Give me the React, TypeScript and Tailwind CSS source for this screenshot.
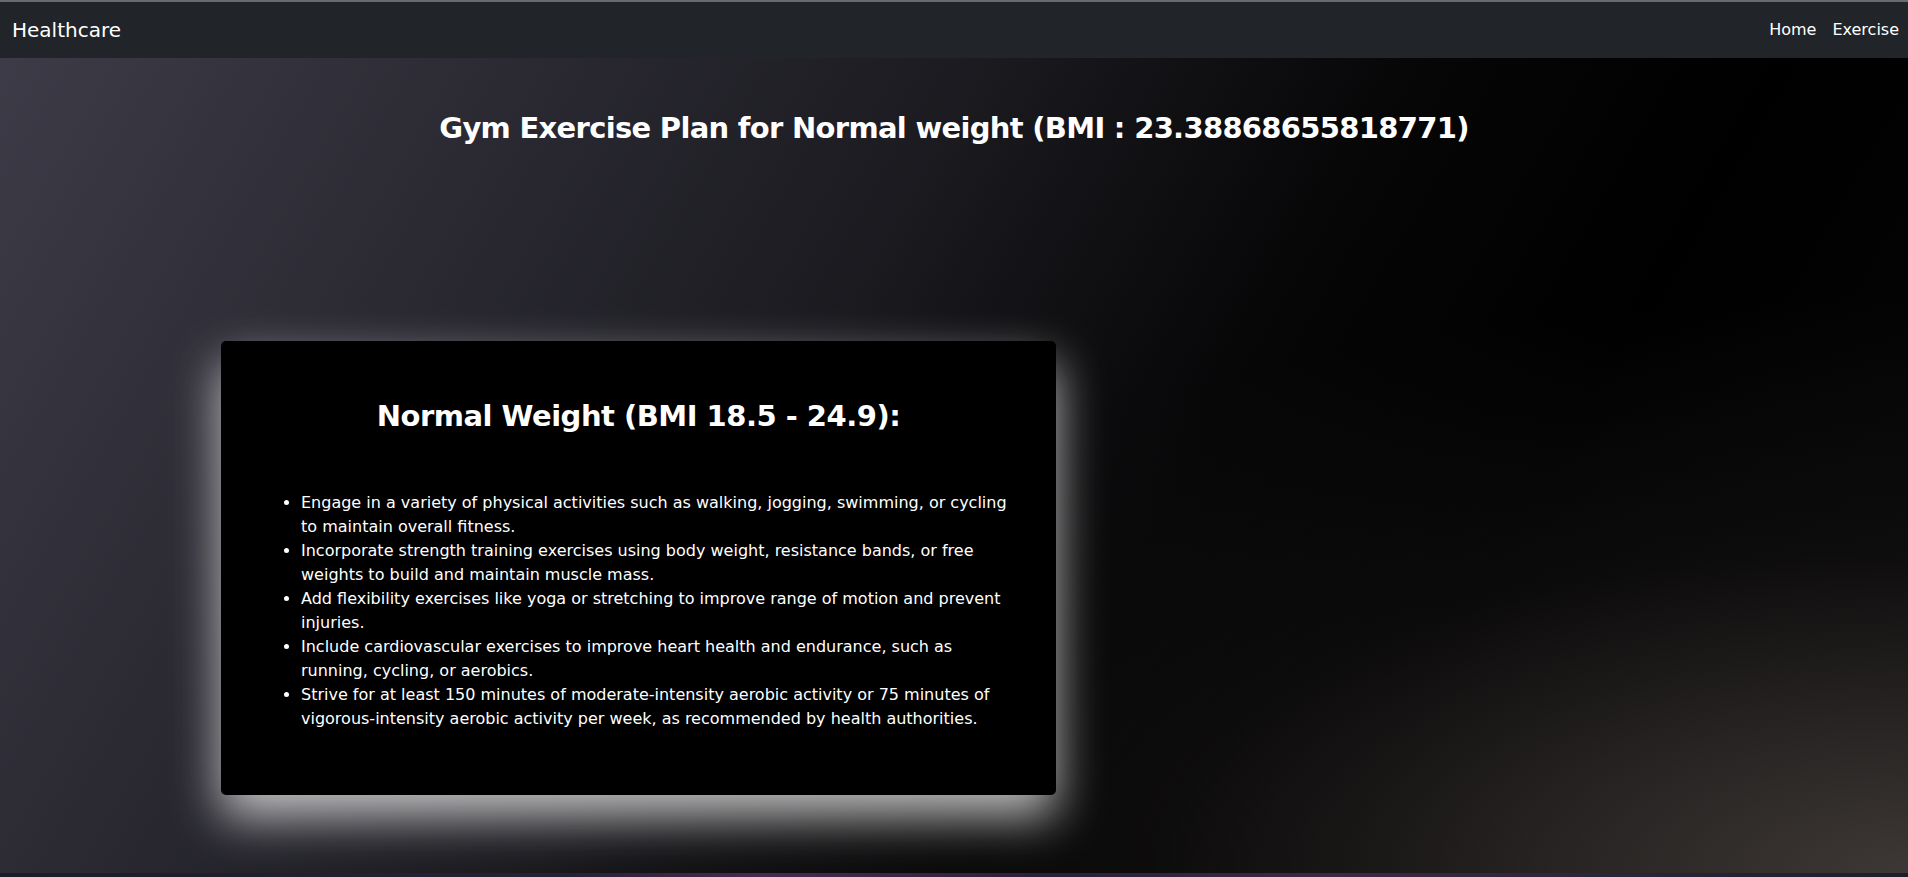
import React from "react";

const tips = [
  "Engage in a variety of physical activities such as walking, jogging, swimming, or cycling to maintain overall fitness.",
  "Incorporate strength training exercises using body weight, resistance bands, or free weights to build and maintain muscle mass.",
  "Add flexibility exercises like yoga or stretching to improve range of motion and prevent injuries.",
  "Include cardiovascular exercises to improve heart health and endurance, such as running, cycling, or aerobics.",
  "Strive for at least 150 minutes of moderate-intensity aerobic activity or 75 minutes of vigorous-intensity aerobic activity per week, as recommended by health authorities.",
];

function Navbar() {
  return (
    <nav className="flex h-[58px] items-center justify-between border-t-2 border-[#6b6b6e] bg-[#212529] pl-3 pr-[1px] text-white">
      <span className="text-[20px]">Healthcare</span>
      <ul className="flex items-center">
        <li>
          <a href="#" className="px-2 text-[16px] text-white">Home</a>
        </li>
        <li>
          <a href="#" className="px-2 text-[16px] text-white">Exercise</a>
        </li>
      </ul>
    </nav>
  );
}

export default function App() {
  return (
    <div className="flex h-screen flex-col overflow-hidden bg-black font-['DejaVu_Sans',sans-serif]">
      <Navbar />

      <main className="flex-1 bg-[radial-gradient(ellipse_at_100%_100%,#3d3836_0%,rgba(20,18,18,0.6)_28%,transparent_50%),linear-gradient(120deg,#3d3b47_0%,#2b2a33_22%,#1a1a1f_42%,#060607_60%,#000_75%,#070707_100%)] text-white">
        <h2 className="mt-[51px] text-center text-[29px] leading-[38px] font-bold tracking-[-0.7px]">
          Gym Exercise Plan for Normal weight (BMI : 23.38868655818771)
        </h2>

        <div className="mt-[194px] pl-[221px]">
          <div className="w-[835px] rounded-[5px] bg-black px-12 pt-[56px] pb-12 shadow-[0_22px_48px_rgba(255,255,255,0.72)]">
            <h2 className="text-center text-[29px] leading-[38px] font-bold tracking-[-0.5px]">
              Normal Weight (BMI 18.5 - 24.9):
            </h2>
            <ul className="mt-[56px] mb-4 list-disc pl-8 text-[16px] leading-6">
              {tips.map((tip) => (
                <li key={tip}>{tip}</li>
              ))}
            </ul>
          </div>
        </div>
      </main>

      <div className="h-[4px] bg-[linear-gradient(90deg,#1d1b2a_0%,#2a2035_30%,#4a2a50_40%,#2b2035_55%,#3d2845_70%,#1f1d2a_100%)]" />
    </div>
  );
}
